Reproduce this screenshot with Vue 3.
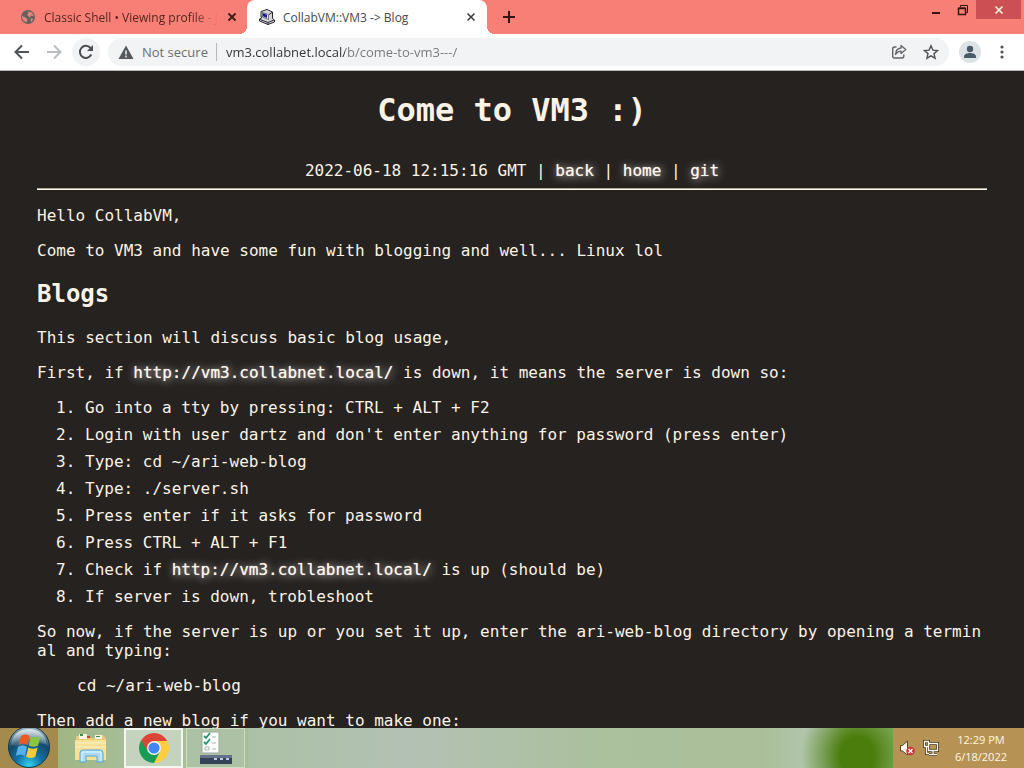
<template>
  <div class="desktop">
    <div class="browser">
      <header class="titlebar">
        <div class="tabs">
          <div class="tab">
            <svg class="favicon" viewBox="0 0 16 16">
              <circle cx="8" cy="8" r="7" fill="#66615e" />
              <path d="M2 7 5.500 8.500l2 1.500-1 3.500C3.500 12.500 1.800 10 2 7zM7.500 2.500 12 3.500l2 3.500-3-.5-1 2-3-2.500 1.500-1.500zM10.500 9.500l3 .5-2.500 3z" fill="#e0857b" />
            </svg>
            <span class="tab-title fade">Classic Shell • Viewing profile - Jo</span>
            <button class="tab-close" aria-label="Close tab">
              <svg viewBox="0 0 10 10"><path d="M1.500 1.500l7 7M8.500 1.500l-7 7" stroke="#3b1d12" stroke-width="1.8" /></svg>
            </button>
          </div>
          <div class="tab active">
            <svg class="favicon" viewBox="0 0 16 16">
              <path d="M2 2.500 8 .5l5.500 2.500v6.500l2 1.500v2L9 15.500.5 12v-2L3 8.500 2 8z" fill="#d5d5dc" stroke="#25252b" />
              <path d="M3.500 3.500 9.500 5.500v5l-6-2.500z" fill="#f2f2f2" stroke="#444" stroke-width=".7" />
              <path d="M4 4.300 8 5.800v3.200L4 7.300z" fill="#1414a0" />
              <path d="M1 10.500l8 3 6-2.500M9 13.500v2M10 5.500l3-2" fill="none" stroke="#25252b" />
            </svg>
            <span class="tab-title">CollabVM::VM3 -&gt; Blog</span>
            <button class="tab-close" aria-label="Close tab">
              <svg viewBox="0 0 10 10"><path d="M1.500 1.500l7 7M8.500 1.500l-7 7" stroke="#3c4043" stroke-width="1.600" /></svg>
            </button>
          </div>
          <button class="new-tab" aria-label="New tab">
            <svg viewBox="0 0 14 14"><path d="M7 1v12M1 7h12" stroke="#35150f" stroke-width="2" /></svg>
          </button>
        </div>
        <div class="window-controls">
          <button aria-label="Minimize">
            <svg viewBox="0 0 12 12"><path d="M2 9h8" stroke="#35150f" stroke-width="2" /></svg>
          </button>
          <button aria-label="Restore">
            <svg viewBox="0 0 12 12"><path d="M3.500 3V1.500h7v7H9" fill="none" stroke="#35150f" /><path d="M1.500 4.500h7v6h-7zM1.500 4h7" fill="none" stroke="#35150f" stroke-width="1.500" /></svg>
          </button>
          <button class="close" aria-label="Close">
            <svg viewBox="0 0 12 12"><path d="M2.500 2.500l7 7M9.500 2.500l-7 7" stroke="#fff0dc" stroke-width="1.700" /></svg>
          </button>
        </div>
      </header>

      <nav class="toolbar">
        <button class="tool" aria-label="Back">
          <svg viewBox="0 0 16 16"><path d="M15 8H2M8 1.500 1.500 8 8 14.500" fill="none" stroke="#505357" stroke-width="2" /></svg>
        </button>
        <button class="tool" aria-label="Forward">
          <svg viewBox="0 0 16 16"><path d="M1 8h13M8 1.500 14.500 8 8 14.500" fill="none" stroke="#bbbdc0" stroke-width="2" /></svg>
        </button>
        <button class="tool reload" aria-label="Reload">
          <svg viewBox="0 0 16 16"><path d="M13.300 10.500A6 6 0 1 1 12.500 4L14 5.500" fill="none" stroke="#4b4e52" stroke-width="2" /><path d="M15 1v6H9z" fill="#4b4e52" /></svg>
        </button>
        <div class="omnibox">
          <svg class="warn" viewBox="0 0 16 16"><path d="M8 1.500 15.500 15H.5z" fill="#54575b" /><path d="M8 6.500v4M8 11.500v2" stroke="#f1f3f4" stroke-width="1.500" /></svg>
          <label class="security" for="address">Not secure</label>
          <input id="address" class="address" type="text" v-model="address" spellcheck="false" />
          <button class="tool" aria-label="Share">
            <svg viewBox="0 0 16 16"><path d="M5.500 3H3.500Q1.700 3 1.700 5v7q0 2 1.800 2h7.500q1.800 0 1.800-2v-1.500" fill="none" stroke="#606367" stroke-width="1.400" /><path d="M10 1.500 14.800 5.500 10 9.500V7.200C7.500 7.200 6 8.300 4.500 10.500 4.700 6.800 6.800 4.300 10 4z" fill="none" stroke="#606367" stroke-width="1.300" stroke-linejoin="round" /></svg>
          </button>
          <button class="tool" aria-label="Bookmark">
            <svg viewBox="0 0 16 16"><path d="M8 1.800l1.900 4.300 4.700.4-3.600 3.100 1.100 4.600L8 11.800l-4.100 2.400L5 9.600 1.400 6.500l4.700-.4z" fill="none" stroke="#505357" stroke-width="1.400" /></svg>
          </button>
        </div>
        <button class="avatar" aria-label="Profile">
          <svg viewBox="0 0 16 16"><circle cx="8" cy="5" r="3.200" fill="#475a66" /><path d="M2 14v-1.500C2 10 5.500 9 8 9s6 1 6 3.500V14z" fill="#475a66" /></svg>
        </button>
        <button class="tool" aria-label="Menu">
          <svg viewBox="0 0 16 16" fill="#505357"><circle cx="8" cy="3" r="1.600" /><circle cx="8" cy="8" r="1.600" /><circle cx="8" cy="13" r="1.600" /></svg>
        </button>
      </nav>

      <main class="page">
        <h1>Come to VM3 :)</h1>
        <div class="meta">
          2022-06-18 12:15:16 GMT | <a href="#">back</a> | <a href="#">home</a> | <a href="#">git</a>
        </div>
        <hr />
        <p>Hello CollabVM,</p>
        <p>Come to VM3 and have some fun with blogging and well... Linux lol</p>
        <h2>Blogs</h2>
        <p>This section will discuss basic blog usage,</p>
        <p>First, if <a href="#">http://vm3.collabnet.local/</a> is down, it means the server is down so:</p>
        <ol>
          <li v-for="step in steps" :key="step.text">
            {{ step.text }}<template v-if="step.link">{{ ' ' }}<a href="#">{{ step.link }}</a> {{ step.after }}</template>
          </li>
        </ol>
        <p>So now, if the server is up or you set it up, enter the ari-web-blog directory by opening a terminal and typing:</p>
        <pre>cd ~/ari-web-blog</pre>
        <p>Then add a new blog if you want to make one:</p>
      </main>
    </div>

    <footer class="taskbar">
      <button class="start" aria-label="Start">
        <svg viewBox="0 0 44 40">
          <defs>
            <radialGradient id="orb" cx=".5" cy=".95" r=".9">
              <stop offset="0" stop-color="#32d2f0" />
              <stop offset=".35" stop-color="#1173a8" />
              <stop offset=".7" stop-color="#174869" />
              <stop offset="1" stop-color="#8ba9b8" />
            </radialGradient>
            <linearGradient id="gloss" x1="0" y1="0" x2="0" y2="1">
              <stop offset="0" stop-color="#fff" stop-opacity=".75" />
              <stop offset="1" stop-color="#fff" stop-opacity=".1" />
            </linearGradient>
          </defs>
          <circle cx="22" cy="19" r="20.500" fill="url(#orb)" stroke="#163848" />
          <path d="M4 17C5 7 12 1 22 1s17 6 18 16c-11-5-25 3-36 0z" fill="url(#gloss)" />
          <path d="M14 8c3-2 5.500-2 8.500-.3l-2 9.300c-3-2-6-2-9 0z" fill="#ec5a24" />
          <path d="M24 8.500c3 1.500 6 1.500 9.500-.5l-2.500 9.500c-3 2-6 1.500-9.300 0z" fill="#8cc63c" />
          <path d="M11 18.800c3-2 6-2 9 0l-2.200 9.200c-3-2-6-2-9 0z" fill="#56b0ea" />
          <path d="M21.300 19.500c3 1.500 6 2 9.300 0l-2.300 9.300c-3 2-6 1.500-9.200 0z" fill="#fccb3a" />
        </svg>
      </button>
      <button class="task" aria-label="File Explorer">
        <svg viewBox="0 0 34 34">
          <path d="M2 5h9l2 2h8V4h8l3 3v22H2z" fill="#e9c979" />
          <path d="M5 3h8v5H5zM21 4h7v4h-7z" fill="#f9f5df" />
          <path d="M6 3h3v2H6zM22 5h4v1h-4z" fill="#388d48" />
          <path d="M13 5h3v2h-3z" fill="#c74526" />
          <path d="M1 9h31v20H1z" fill="#f5e198" />
          <path d="M1 12h31M1 16h31" stroke="#faf0bd" />
          <path d="M6 31v-9q0-3 3-3h17q3 0 3 3v9h-6v-6H12v6z" fill="#a9dcf3" stroke="#5ca6d0" />
          <path d="M8 30v-9h19v9" fill="none" stroke="#e4f8ff" />
        </svg>
      </button>
      <button class="task running current" aria-label="Google Chrome">
        <svg viewBox="0 0 32 32">
          <path d="M16 16 3.010 8.500A15 15 0 0 1 28.990 8.500z" fill="#db4437" />
          <path d="M16 16 28.990 8.500A15 15 0 0 1 16 31z" fill="#ffcd40" />
          <path d="M16 16 16 31A15 15 0 0 1 3.010 8.500z" fill="#169c55" />
          <path d="M16 9h13.300l-.3-.5H16zM9.900 19.500 3 8.500l7 4z" fill="#db4437" />
          <path d="M22 19.500 16 31l-1-8z" fill="#169c55" />
          <path d="M16 9h13.200a15 15 0 0 1 1 10L23 16z" fill="#ffcd40" />
          <circle cx="16" cy="16" r="7" fill="#f2f5f8" />
          <circle cx="16" cy="16" r="5.600" fill="#4285f4" />
        </svg>
      </button>
      <button class="task running" aria-label="Run">
        <svg viewBox="0 0 34 34">
          <path d="M3 1h17v21H3z" fill="#fbfdfb" stroke="#9aa89c" />
          <path d="M5 5l2 2 4-5M5 11l2 2 4-5" fill="none" stroke="#24966c" stroke-width="1.800" />
          <path d="M6 16h4v3H6zM13 6h4M13 12h4M13 18h4" fill="none" stroke="#a7b8ae" />
          <path d="M1 24h32v9H1z" fill="#354257" />
          <path d="M1 24h32v3H1z" fill="#65718b" />
          <path d="M15 28h3M21 28h3M27 28h3" stroke="#c3cbda" stroke-width="2" />
        </svg>
      </button>
      <div class="wallpaper"></div>
      <div class="tray">
        <svg class="tray-icon" viewBox="0 0 16 16">
          <path d="M1.500 5.500h2L8.500 1v14l-5-4h-2z" fill="#fff8e8" stroke="#55422b" />
          <circle cx="11.500" cy="11" r="4.300" fill="#ce3433" />
          <path d="M9.500 9l4 4M13.500 9l-4 4" stroke="#fff" stroke-width="1.300" />
        </svg>
        <svg class="tray-icon" viewBox="0 0 16 16">
          <path d="M5.500 3.500h9v7h-9zM10 11v3M6 14.500h8" fill="none" stroke="#44351f" stroke-width="3" />
          <path d="M1.500 1.500h4v5h-4zM3.500 6v7.500H6" fill="none" stroke="#44351f" stroke-width="3" />
          <path d="M5.500 3.500h9v7h-9zM10 11v3M6 14.500h8" fill="none" stroke="#fff8e8" stroke-width="1.300" />
          <path d="M1.500 1.500h4v5h-4zM3.500 6v7.500H6" fill="none" stroke="#fff8e8" stroke-width="1.300" />
        </svg>
        <div class="clock">
          <span>12:29 PM</span>
          <span>6/18/2022</span>
        </div>
      </div>
    </footer>
  </div>
</template>

<script setup>
import { ref } from 'vue';

const address = ref('vm3.collabnet.local/b/come-to-vm3---/');

const steps = [
  { text: 'Go into a tty by pressing: CTRL + ALT + F2' },
  { text: "Login with user dartz and don't enter anything for password (press enter)" },
  { text: 'Type: cd ~/ari-web-blog' },
  { text: 'Type: ./server.sh' },
  { text: 'Press enter if it asks for password' },
  { text: 'Press CTRL + ALT + F1' },
  { text: 'Check if', link: 'http://vm3.collabnet.local/', after: 'is up (should be)' },
  { text: 'If server is down, trobleshoot' }
];
</script>

<style>
body {
  margin: 0;
}
</style>

<style scoped>
.desktop {
  display: flex;
  flex-direction: column;
  height: 100vh;
  overflow: hidden;
  font-family: 'Open Sans', 'Noto Sans', sans-serif;
  font-size: 12px;
}

button {
  display: flex;
  align-items: center;
  justify-content: center;
  flex: none;
  padding: 0;
  border: none;
  background: none;
}

svg {
  display: block;
  flex: none;
}

.browser {
  display: flex;
  flex-direction: column;
  flex: 1;
  min-height: 0;
}

/* tab strip */
.titlebar {
  display: flex;
  justify-content: space-between;
  height: 34px;
  background: #f77f76;
}

.tabs {
  display: flex;
  flex: 1;
  min-width: 0;
  padding-left: 8px;
}

.tab {
  position: relative;
  display: flex;
  align-items: center;
  gap: 8px;
  flex: 0 1 240px;
  min-width: 0;
  box-sizing: border-box;
  padding: 0 10px 0 12px;
  color: #57251c;
}

.tab.active {
  margin-left: -1px;
  background: #fff;
  border-radius: 8px 8px 0 0;
  color: #45484c;
}

.tab.active::before,
.tab.active::after {
  content: '';
  position: absolute;
  bottom: 0;
  width: 8px;
  height: 8px;
}

.tab.active::before {
  right: 100%;
  background: radial-gradient(circle at 0 0, transparent 8px, #fff 8px);
}

.tab.active::after {
  left: 100%;
  background: radial-gradient(circle at 100% 0, transparent 8px, #fff 8px);
}

.favicon {
  width: 16px;
  height: 16px;
}

.tab-title {
  flex: 1;
  min-width: 0;
  overflow: hidden;
  white-space: nowrap;
}

.tab-title.fade {
  mask-image: linear-gradient(to right, #000 calc(100% - 24px), transparent);
}

.tab-close {
  width: 12px;
  height: 12px;
}

.tab-close svg {
  width: 10px;
  height: 10px;
}

.new-tab {
  width: 28px;
  margin-left: 8px;
}

.new-tab svg {
  width: 14px;
  height: 14px;
}

.window-controls {
  display: flex;
  padding-right: 3px;
}

.window-controls button {
  width: 27px;
  height: 19px;
}

.window-controls svg {
  width: 12px;
  height: 12px;
}

.window-controls .close {
  width: 45px;
  background: #cb4f53;
}

/* address row */
.toolbar {
  display: flex;
  align-items: center;
  height: 36px;
  padding: 0 8px;
  background: #fff;
  border-bottom: 1px solid #b9b7b5;
}

.tool {
  width: 28px;
  height: 28px;
  margin-right: 4px;
}

.tool svg {
  width: 16px;
  height: 16px;
}

.reload {
  border-radius: 50%;
  background: #f1f2f3;
}

.omnibox {
  display: flex;
  align-items: center;
  flex: 1;
  min-width: 0;
  height: 28px;
  margin: 0 10px 0 4px;
  padding-left: 10px;
  border-radius: 14px;
  background: #f1f3f4;
}

.omnibox .tool:last-child {
  margin-right: 4px;
}

.warn {
  width: 16px;
  height: 16px;
}

.security {
  margin-left: 8px;
  padding-right: 8px;
  border-right: 1px solid #b5b8bb;
  font-size: 13px;
  line-height: 18px;
  color: #6b6e72;
}

.address {
  flex: 1;
  min-width: 0;
  padding: 0 0 0 9px;
  border: none;
  outline: none;
  font: inherit;
  font-size: 13px;
  /* host is dark, path is grey */
  color: transparent;
  background: linear-gradient(to right, #303337 128px, #74777b 128px);
  background-clip: text;
}

.avatar {
  width: 22px;
  height: 22px;
  margin-right: 7px;
  border-radius: 50%;
  background: #dce3e7;
}

.avatar svg {
  width: 16px;
  height: 16px;
}

.toolbar > .tool:last-child {
  margin-right: 0;
}

/* blog page */
.page {
  flex: 1;
  min-height: 0;
  overflow: hidden;
  padding: 0 37px;
  background: #262220;
  color: #fbf3e6;
  font-family: 'DejaVu Sans Mono', monospace;
  font-size: 16px;
  line-height: 19px;
  word-break: break-all;
}

.page h1 {
  margin: 21px 0 32px;
  font-size: 32px;
  line-height: 37px;
  text-align: center;
}

.page h2 {
  margin: 20px 0;
  font-size: 24px;
  line-height: 28px;
}

.page p,
.page ol {
  margin: 16px 0;
}

.page ol {
  padding-left: 48px;
}

.page li + li {
  margin-top: 8px;
}

.page pre {
  margin: 16px 40px;
  font-family: inherit;
}

.page a {
  color: #fff8ee;
  text-decoration: none;
  text-shadow: 1px 1px 8px #e8e4dc, 0 0 1px #b8b2a8;
}

.meta {
  text-align: center;
}

.page hr {
  box-sizing: border-box;
  height: 2px;
  margin: 8px 0 16px;
  border: none;
  border-top: 1px solid #aca69f;
  background: #fff8ee;
}

/* taskbar */
.taskbar {
  display: flex;
  height: 40px;
  background: #a9bd97;
}

.start {
  width: 58px;
  background: #a58a4d;
}

.start svg {
  width: 44px;
  height: 40px;
}

.task {
  width: 66px;
  background: linear-gradient(to right, #a0b684, #a7bd96);
}

.task svg {
  width: 34px;
  height: 34px;
}

.task.running {
  width: 59px;
  box-sizing: border-box;
  margin-right: 3px;
  border: 1px solid #cfdcc6;
  background: #adc2a4;
}

.task.current {
  border: 2px solid #f4f7ef;
  background: #c5d2bd;
}

.task.current svg {
  width: 32px;
  height: 32px;
}

.wallpaper {
  flex: 1;
  background:
    radial-gradient(ellipse 56px 64px at calc(100% - 36px) 28px, #4b7d0c 0 30%, transparent 100%),
    linear-gradient(to right, #abc1a6, #b3c1b4 25%, #abc09d 55%, #aabf99 80%, #b5c9b4 90%, #8fb873);
}

.tray {
  display: flex;
  align-items: center;
  gap: 8px;
  padding: 0 17px 0 6px;
  background: #b69355;
}

.tray-icon {
  width: 16px;
  height: 16px;
}

.clock {
  display: flex;
  flex-direction: column;
  align-items: center;
  margin-left: 8px;
  font-size: 11px;
  line-height: 17px;
  color: #fff6e4;
}
</style>
